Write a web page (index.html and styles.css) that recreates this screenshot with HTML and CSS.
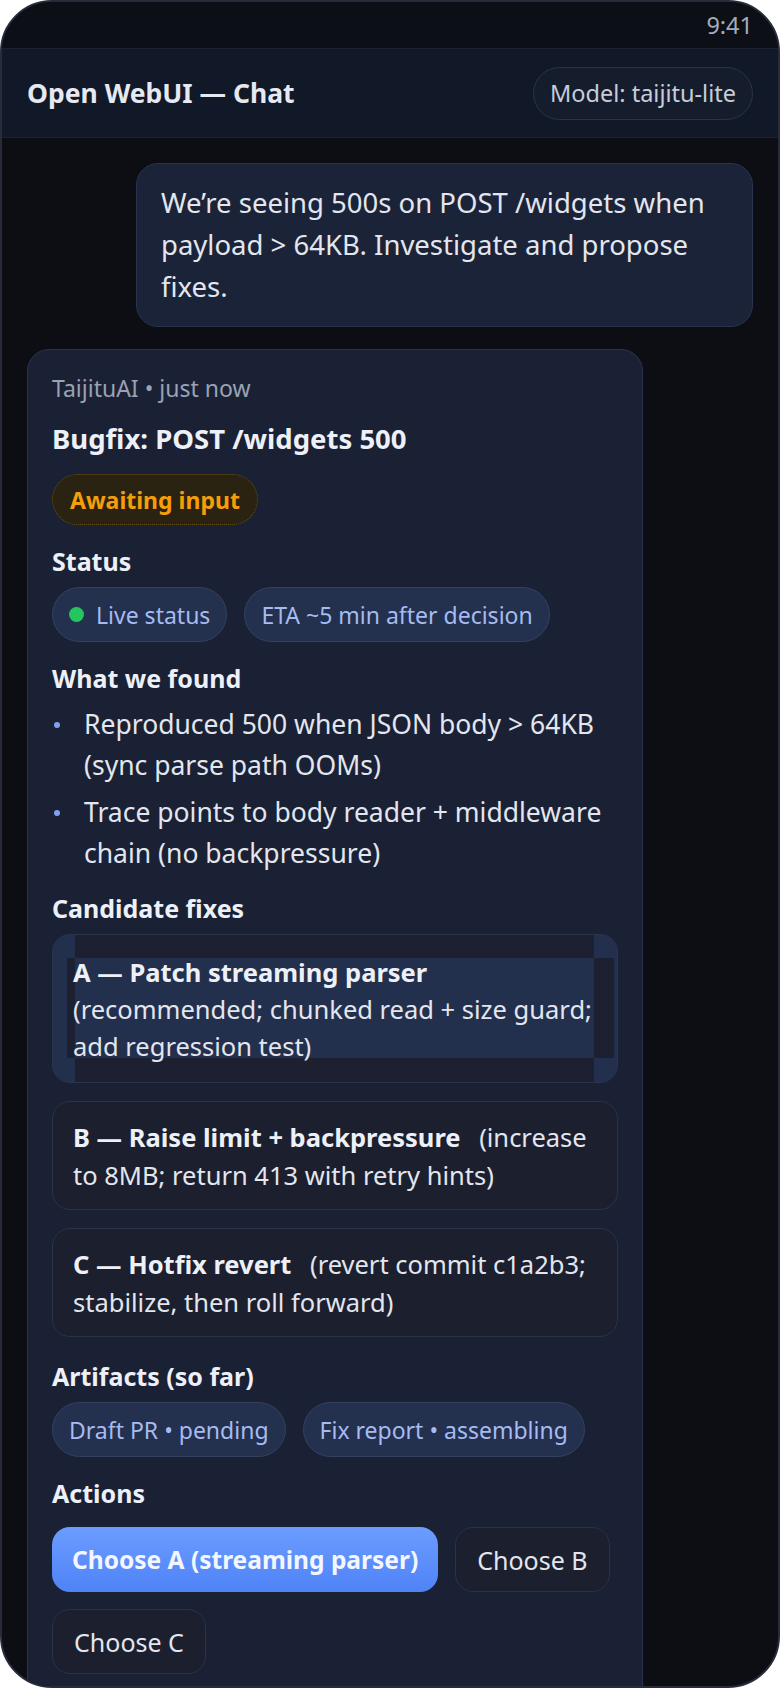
FILE: index.html
```html
<!DOCTYPE html>
<html lang="en">
<head>
<meta charset="utf-8">
<title>Open WebUI — Chat</title>
<link rel="stylesheet" href="styles.css">
</head>
<body>
<div class="phone">
  <div class="statusbar"><span class="time">9:41</span></div>
  <header class="topbar">
    <h1 class="title">Open WebUI — Chat</h1>
    <span class="model-pill">Model: taijitu-lite</span>
  </header>
  <main class="chat">
    <div class="user-row">
      <div class="user-bubble">We’re seeing 500s on POST /widgets when payload &gt; 64KB. Investigate and propose fixes.</div>
    </div>
    <section class="ai-card">
      <div class="meta">TaijituAI • just now</div>
      <h2 class="card-title">Bugfix: POST /widgets 500</h2>
      <div class="row"><span class="awaiting">Awaiting input</span></div>

      <div class="section">
        <h3 class="label">Status</h3>
        <div class="chips">
          <span class="chip"><span class="dot"></span>Live status</span>
          <span class="chip">ETA ~5 min after decision</span>
        </div>
      </div>

      <div class="section">
        <h3 class="label">What we found</h3>
        <ul class="findings">
          <li>Reproduced 500 when JSON body &gt; 64KB (sync parse path OOMs)</li>
          <li>Trace points to body reader + middleware chain (no backpressure)</li>
        </ul>
      </div>

      <div class="section section-tight">
        <h3 class="label">Candidate fixes</h3>
        <div class="options">
          <div class="option option-a"><strong class="opt-name block">A — Patch streaming parser</strong>(recommended; chunked read + size guard; add regression test)</div>
          <div class="option"><strong class="opt-name">B — Raise limit + backpressure</strong> <span class="opt-desc">(increase to&nbsp;8MB; return 413 with retry hints)</span></div>
          <div class="option"><strong class="opt-name">C — Hotfix revert</strong> <span class="opt-desc">(revert commit c1a2b3; stabilize, then roll forward)</span></div>
        </div>
      </div>

      <div class="section section-loose">
        <h3 class="label">Artifacts (so far)</h3>
        <div class="chips">
          <span class="chip">Draft PR • pending</span>
          <span class="chip">Fix report • assembling</span>
        </div>
      </div>

      <div class="section">
        <h3 class="label">Actions</h3>
        <div class="actions">
          <button class="btn btn-primary">Choose A (streaming parser)</button>
          <button class="btn">Choose B</button>
          <button class="btn">Choose C</button>
        </div>
      </div>
    </section>
  </main>
</div>
</body>
</html>
```

FILE: styles.css
```css
* { box-sizing: border-box; }
html, body { margin: 0; padding: 0; }
body {
  background: #ffffff;
  font-family: "Noto Sans", "Open Sans", sans-serif;
  width: 780px;
  height: 1688px;
  overflow: hidden;
}
.phone {
  width: 780px;
  height: 1688px;
  border-radius: 52px;
  overflow: hidden;
  background: #0c0e13;
  border: 2px solid #262c3a;
  display: flex;
  flex-direction: column;
}
.statusbar {
  height: 46px;
  flex: none;
  display: flex;
  align-items: center;
  justify-content: flex-end;
  padding: 0 25px;
  background: #0c0f16;
}
.time {
  color: #a3acbd;
  font-size: 23.5px;
}
.topbar {
  height: 90px;
  flex: none;
  display: flex;
  align-items: center;
  justify-content: space-between;
  padding: 0 25px;
  background: #111827;
  border-top: 1px solid #1b2333;
  border-bottom: 1px solid #1b2333;
}
.title {
  margin: 0;
  font-size: 26.5px;
  font-weight: 700;
  color: #e6e9f2;
}
.model-pill {
  height: 53px;
  display: flex;
  align-items: center;
  padding: 0 16px;
  border-radius: 27px;
  border: 1px solid #2a3448;
  background: #151d2d;
  color: #c6cdda;
  font-size: 23.5px;
}
.chat {
  flex: 1;
  padding: 25px 25px 0;
  display: flex;
  flex-direction: column;
  gap: 22px;
  overflow: hidden;
}
.user-row {
  display: flex;
  justify-content: flex-end;
}
.user-bubble {
  width: 617px;
  padding: 18px 32px 18px 24px;
  background: #1b2338;
  border: 1px solid #2a3450;
  border-radius: 22px;
  color: #e3e6ee;
  font-size: 27.5px;
  line-height: 42px;
}
.ai-card {
  width: 616px;
  flex: 1;
  background: #1a2135;
  border: 1px solid #2a3450;
  border-radius: 22px;
  padding: 22px 24px 40px;
  display: flex;
  flex-direction: column;
}
.meta {
  color: #9aa2b4;
  font-size: 23px;
  line-height: 32px;
}
.card-title {
  margin: 17px 0 0;
  font-size: 27.5px;
  line-height: 36px;
  font-weight: 700;
  color: #eef0f7;
}
.row { display: flex; margin-top: 17px; }
.awaiting {
  height: 51px;
  display: flex;
  align-items: center;
  padding: 0 17px;
  border-radius: 26px;
  background: #2b2311;
  border: 1px dotted #6b5316;
  color: #f59e0b;
  font-weight: 700;
  font-size: 23px;
}
.section {
  margin-top: 19px;
  display: flex;
  flex-direction: column;
  gap: 9px;
}
.section-tight { margin-top: 17px; }
.section-loose { margin-top: 22px; }
.label {
  margin: 0;
  font-size: 25px;
  line-height: 34px;
  font-weight: 700;
  color: #eef0f7;
}
.chips {
  display: flex;
  flex-wrap: wrap;
  gap: 17px;
}
.chip {
  height: 55px;
  display: flex;
  align-items: center;
  gap: 12px;
  padding: 0 16px;
  border-radius: 28px;
  background: #23304e;
  border: 1px solid #34415f;
  color: #a6bbf1;
  font-size: 23px;
}
.dot {
  width: 15px;
  height: 15px;
  border-radius: 50%;
  background: #22c55e;
}
.findings {
  margin: 0;
  padding: 0;
  list-style: none;
  display: flex;
  flex-direction: column;
  gap: 6px;
}
.findings li {
  position: relative;
  padding-left: 32px;
  color: #e3e6ee;
  font-size: 26.5px;
  line-height: 41px;
}
.findings li::before {
  content: "";
  position: absolute;
  left: 2px;
  top: 18px;
  width: 6px;
  height: 6px;
  border-radius: 50%;
  background: #7fa2ee;
}
.options {
  display: flex;
  flex-direction: column;
  gap: 18px;
}
.option {
  padding: 16px 20px 15px;
  border-radius: 18px;
  border: 1px solid #2b3346;
  background: #1b1f2e;
  color: #e3e6ee;
  font-size: 25.5px;
  line-height: 38px;
}
.option-a {
  padding: 19px 20px 17px;
  line-height: 37px;
  background-color: #23304d;
  background-image:
    linear-gradient(#23304d, #23304d),
    linear-gradient(#1c2030, #1c2030),
    linear-gradient(#1c2030, #1c2030);
  background-repeat: no-repeat;
  background-position: 22px 23px, 22px 0, 14px 23px;
  background-size: 519px 100px, 519px 100%, 547px 100px;
}
.opt-name { font-weight: 700; color: #eef0f7; }
.block { display: block; }
.opt-desc { margin-left: 12px; }
.actions {
  display: flex;
  flex-wrap: wrap;
  gap: 17px;
  margin-top: 8px;
}
.btn {
  height: 65px;
  padding: 0 21px;
  border-radius: 18px;
  border: 1px solid #2b3346;
  background: #1b1f2e;
  color: #e3e6ee;
  font-family: inherit;
  font-size: 25px;
}
.btn-primary {
  border: none;
  background: linear-gradient(#6c9cff, #4f83f7);
  color: #f3f6ff;
  font-weight: 700;
  font-size: 24.5px;
  padding: 0 20px;
}
```
